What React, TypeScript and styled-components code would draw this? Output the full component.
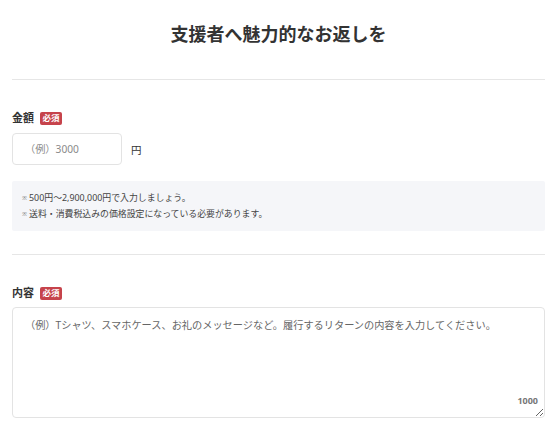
import React from "react";
import styled, { createGlobalStyle } from "styled-components";

const Global = createGlobalStyle`
  html, body { margin: 0; padding: 0; background: #fff; }
  body {
    font-family: "Noto Sans", "Noto Sans CJK JP", sans-serif;
    color: #333;
  }
`;

const Page = styled.div`
  width: 555px;
  box-sizing: border-box;
  padding: 0 10px 0 12px;
`;

const Header = styled.header`
  height: 79px;
  display: flex;
  align-items: flex-start;
  justify-content: center;
  border-bottom: 1px solid #e6e6e6;
`;

const Title = styled.h1`
  margin: 22px 0 0;
  font-size: 18px;
  line-height: 24px;
  font-weight: 700;
  color: #333;
  letter-spacing: 0;
`;

const Section = styled.section<{ $top: number; $bottom: number; $divider?: boolean }>`
  padding-top: ${(p) => p.$top}px;
  padding-bottom: ${(p) => p.$bottom}px;
  border-bottom: ${(p) => (p.$divider ? "1px solid #e6e6e6" : "none")};
`;

const LabelRow = styled.div`
  display: flex;
  align-items: center;
  gap: 6px;
  height: 14px;
`;

const Label = styled.span`
  font-size: 11px;
  font-weight: 700;
  color: #333;
  line-height: 14px;
`;

const Badge = styled.span`
  display: inline-flex;
  align-items: center;
  justify-content: center;
  background: #c6434b;
  color: #fff;
  font-size: 8.5px;
  font-weight: 700;
  line-height: 1;
  height: 13px;
  padding: 0 2.5px;
  border-radius: 2px;
`;

const InputRow = styled.div`
  display: flex;
  align-items: center;
  gap: 9px;
  margin-top: 8px;
`;

const AmountInput = styled.input`
  width: 110px;
  height: 32px;
  box-sizing: border-box;
  border: 1px solid #e3e3e3;
  border-radius: 4px;
  padding: 0 12px;
  font-family: inherit;
  font-size: 10.2px;
  color: #333;
  outline: none;
  &::placeholder { color: #8a8a8a; }
`;

const Unit = styled.span`
  font-size: 10.5px;
  color: #333;
`;

const Notes = styled.ul`
  margin: 16px 0 0;
  list-style: none;
  background: #f5f6f9;
  padding: 9px 10px 9px 10px;
  border-radius: 2px;
`;

const Note = styled.li`
  font-size: 8.9px;
  line-height: 15px;
  color: #444;
  &::before {
    content: "※";
    font-size: 6px;
    margin-right: 2px;
    color: #777;
    vertical-align: 1px;
  }
`;

const TextWrap = styled.div`
  position: relative;
  margin-top: 7px;
`;

const TextArea = styled.textarea`
  display: block;
  width: 100%;
  height: 111px;
  box-sizing: border-box;
  border: 1px solid #e3e3e3;
  border-radius: 4px;
  padding: 9px 12px;
  font-family: inherit;
  font-size: 10.2px;
  line-height: 16px;
  color: #333;
  outline: none;
  resize: vertical;
  &::placeholder { color: #666; }
`;

const Counter = styled.span`
  position: absolute;
  right: 7px;
  bottom: 11px;
  font-size: 9px;
  font-weight: 700;
  color: #777;
`;

export default function App() {
  return (
    <Page>
      <Global />
      <Header>
        <Title>支援者へ魅力的なお返しを</Title>
      </Header>
      <Section $top={31} $bottom={23} $divider>
        <LabelRow>
          <Label>金額</Label>
          <Badge>必須</Badge>
        </LabelRow>
        <InputRow>
          <AmountInput placeholder="（例）3000" />
          <Unit>円</Unit>
        </InputRow>
        <Notes>
          <Note>500円〜2,900,000円で入力しましょう。</Note>
          <Note>送料・消費税込みの価格設定になっている必要があります。</Note>
        </Notes>
      </Section>
      <Section $top={31} $bottom={0}>
        <LabelRow>
          <Label>内容</Label>
          <Badge>必須</Badge>
        </LabelRow>
        <TextWrap>
          <TextArea placeholder="（例）Tシャツ、スマホケース、お礼のメッセージなど。履行するリターンの内容を入力してください。" />
          <Counter>1000</Counter>
        </TextWrap>
      </Section>
    </Page>
  );
}
